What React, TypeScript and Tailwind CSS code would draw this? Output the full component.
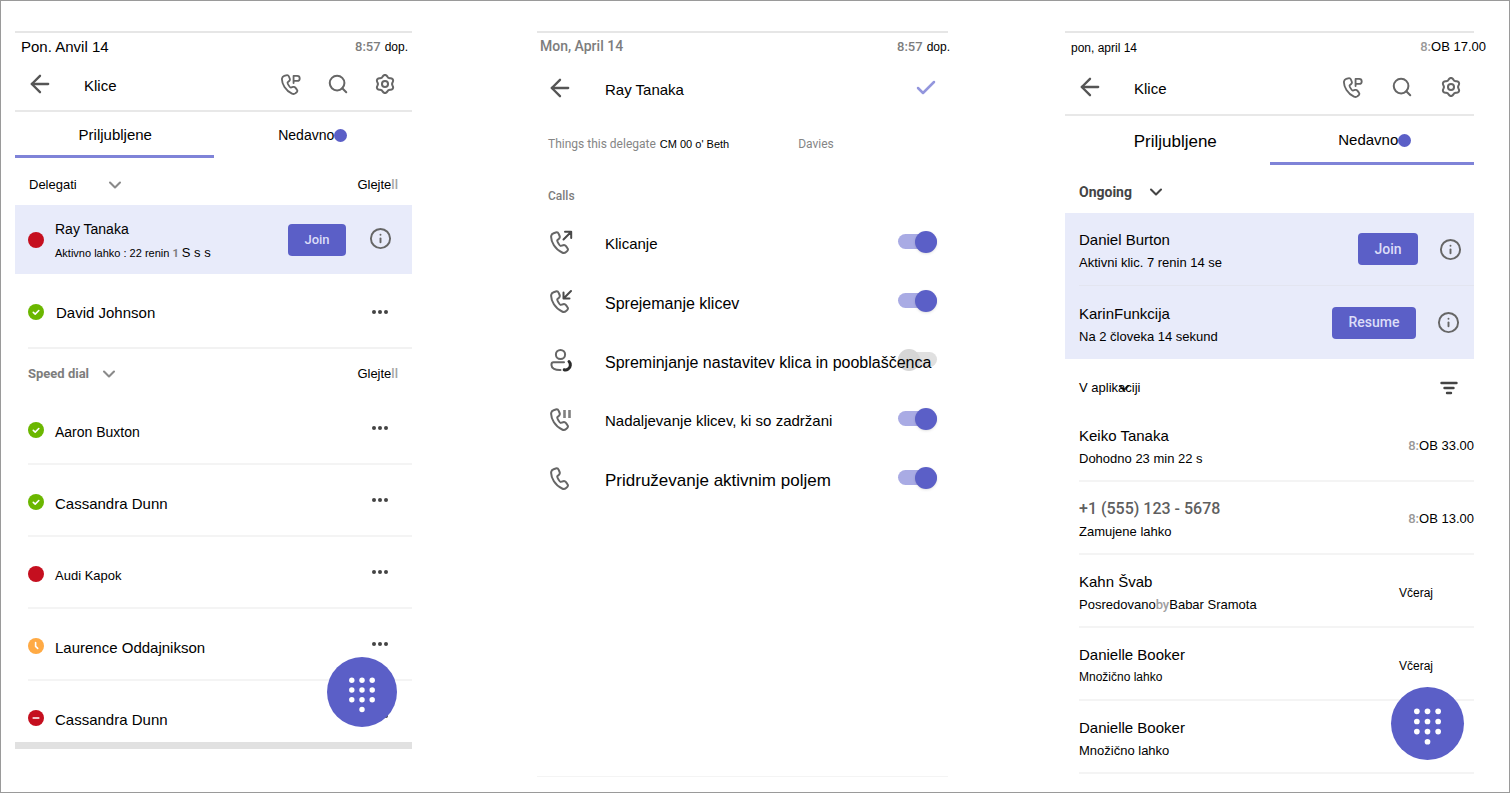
import type { ReactNode } from 'react';
import { ArrowLeft, Check, ChevronDown, Info, Search } from 'lucide-react';

const HANDSET =
  'M4.600 3.200 6.800 2.500C8 2.100 9.200 2.700 9.700 3.800L10.600 6C11 7 10.800 8 10 8.700L8.300 10.300C8.100 10.700 8.500 11.900 9.500 13.500 10.500 15.200 11.200 15.900 11.700 15.900L14.200 15.200C15.300 14.900 16.300 15.300 17 16.200L18.400 18.100C19.100 19 19 20.200 18.200 21L17.100 21.900C16 22.900 14.400 23.100 13.100 22.500 10.100 21.200 7.300 18.900 4.900 15.200 2.600 11.500 1.900 8.500 2.200 5.900 2.400 4.600 3.300 3.600 4.600 3.200Z';

const GEAR = Array.from({ length: 72 }, (_, i) => {
  const angle = (i * Math.PI) / 36;
  const radius = 8.8 - 1.1 * Math.cos(6 * angle);
  return `${(12 + radius * Math.cos(angle)).toFixed(2)},${(12 + radius * Math.sin(angle)).toFixed(2)}`;
}).join(' ');

type CallKind = 'park' | 'out' | 'in' | 'hold' | 'plain' | 'delegate';

function CallIcon({ kind, size = 'size-6' }: { kind: CallKind; size?: string }) {
  return (
    <svg
      viewBox="0 0 24 24"
      className={`shrink-0 ${size}`}
      fill="none"
      stroke="#666"
      strokeWidth="2"
      strokeLinecap="round"
      strokeLinejoin="round"
      aria-hidden="true"
    >
      {kind !== 'delegate' && <path d={HANDSET} />}
      {kind === 'park' && <path d="M14.800 11V3.200h4a2.700 2.700 0 0 1 0 5.400h-4" />}
      {kind === 'out' && <path d="M14.500 9.500 22 2M16 1.800h6.200V8" stroke="#4a4a4a" />}
      {kind === 'in' && <path d="M22 2 14.800 9.200M14.500 3.500v6h6" stroke="#4a4a4a" />}
      {kind === 'hold' && <path d="M15.500 3v8M20.500 3v8" strokeLinecap="butt" strokeWidth="2.600" stroke="#808080" />}
      {kind === 'delegate' && (
        <>
          <circle cx="11.500" cy="6.500" r="4.600" />
          <path d="M15 14.200H4.500a2 2 0 0 0-2 2v1c0 3.100 3.600 5 9 4.800" />
          <path d="M20 13.500c2 2 1.800 5.600-.8 7.400-1.300.9-2.700 1.200-4 .800" stroke="#2b2b2b" strokeWidth="3" />
        </>
      )}
    </svg>
  );
}

function GearIcon() {
  return (
    <svg viewBox="0 0 24 24" className="size-[22px]" fill="none" stroke="#666" strokeWidth="2.200" strokeLinejoin="round" aria-hidden="true">
      <polygon points={GEAR} />
      <circle cx="12" cy="12" r="3.300" />
    </svg>
  );
}

type SoftProps = { children: ReactNode; weight?: string; color?: string; className?: string };

function Soft({ children, weight = 'font-medium', color = 'text-[#7d7d7d]', className = '' }: SoftProps) {
  return <span className={`font-[Roboto,sans-serif] ${weight} ${color} ${className}`}>{children}</span>;
}

type Presence = 'busy' | 'available' | 'away' | 'dnd';

function PresenceDot({ presence }: { presence: Presence }) {
  const fill = presence === 'available' ? '#6bb700' : presence === 'away' ? '#ffaa44' : '#c50f1f';
  return (
    <svg viewBox="0 0 16 16" className="size-4 shrink-0" role="img" aria-label={presence}>
      <circle cx="8" cy="8" r="8" fill={fill} />
      <g fill="none" stroke="#fff" strokeWidth="1.6" strokeLinecap="round" strokeLinejoin="round">
        {presence === 'available' && <path d="m5.300 8.300 1.900 1.800 3.600-3.600" />}
        {presence === 'away' && <path d="M7.600 4.500v3.900l2.100 2" />}
        {presence === 'dnd' && <path d="M5.200 8h5.600" />}
      </g>
    </svg>
  );
}

function MoreButton() {
  return (
    <button type="button" aria-label="Več možnosti" className="flex h-4 w-4 items-center justify-between">
      <span className="size-1 rounded-full bg-[#444]" />
      <span className="size-1 rounded-full bg-[#444]" />
      <span className="size-1 rounded-full bg-[#444]" />
    </button>
  );
}

function InfoButton() {
  return (
    <button type="button" aria-label="Informacije" className="flex size-6 items-center justify-center">
      <Info className="size-[23px] text-[#666]" strokeWidth={2} />
    </button>
  );
}

function DialpadButton({ className }: { className: string }) {
  return (
    <button type="button" aria-label="Številčnica" className={`absolute rounded-full bg-[#5b5fc7] ${className}`}>
      <svg viewBox="0 0 72 72" className="size-full" fill="#fff" aria-hidden="true">
        {[24, 34, 44].map((cy) => [25.5, 36, 46.5].map((cx) => <circle key={`${cx}-${cy}`} cx={cx} cy={cy} r="2.800" />))}
        <circle cx="36" cy="54" r="2.800" />
      </svg>
    </button>
  );
}

function CallsHeader({ className, gap }: { className: string; gap: string }) {
  return (
    <div className={`flex items-center border-b-2 border-[#e8e8e8] pl-[11px] ${className}`}>
      <button type="button" aria-label="Nazaj">
        <ArrowLeft className="size-7 text-[#555]" strokeWidth={2} />
      </button>
      <h1 className="flex-1 pt-1 pl-[30px] text-[15px]">Klice</h1>
      <div className={`flex items-center ${gap}`}>
        <button type="button" aria-label="Parkirani klici"><CallIcon kind="park" size="size-[22px]" /></button>
        <button type="button" aria-label="Iskanje"><Search className="size-[22px] text-[#666]" strokeWidth={2.200} /></button>
        <button type="button" aria-label="Nastavitve"><GearIcon /></button>
      </div>
    </div>
  );
}

function Tab({ active, className, children }: { active: boolean; className: string; children: ReactNode }) {
  return (
    <button
      type="button"
      role="tab"
      aria-selected={active}
      className={`flex items-center justify-center border-b-3 ${active ? 'border-[#7f83d8]' : 'border-transparent'} ${className}`}
    >
      {children}
    </button>
  );
}

function Badge() {
  return <span className="size-[13px] rounded-full bg-[#5b5fc7]" />;
}

function SeeAll() {
  return (
    <a href="#vse" className="flex pr-3.5 text-[13px]">
      Glejte
      <Soft color="text-[#a5a5a5]">ll</Soft>
    </a>
  );
}

const contacts: { name: string; presence: Presence; size: string; row: string }[] = [
  { name: 'Aaron Buxton', presence: 'available', size: 'text-[14px]', row: 'h-[72px] border-b-2' },
  { name: 'Cassandra Dunn', presence: 'available', size: 'text-[15px]', row: 'h-[72px] border-b-2' },
  { name: 'Audi Kapok', presence: 'busy', size: 'text-[13px]', row: 'h-[72px] border-b-2' },
  { name: 'Laurence Oddajnikson', presence: 'away', size: 'text-[15px]', row: 'h-[72px] border-b-2' },
  { name: 'Cassandra Dunn', presence: 'dnd', size: 'text-[15px]', row: 'h-[61px]' },
];

function FavoritesScreen() {
  return (
    <section className="relative min-w-0 flex-[397_1_0%] self-start border-t-2 border-[#e6e6e6]">
      <div className="flex h-[27px] items-center justify-between pr-1 pl-1.5">
        <span className="pt-0.5 text-[15px]">Pon. Anvil 14</span>
        <span className="flex items-center gap-1 text-[12px]"><Soft className="text-[13px]">8:57</Soft>dop.</span>
      </div>
      <CallsHeader className="h-[52px] pr-4 pb-0.5" gap="gap-[25px]" />
      <div role="tablist" className="grid h-[46px] grid-cols-2">
        <Tab active className="pt-1 pl-0.5 text-[15px]">Priljubljene</Tab>
        <Tab active={false} className="pt-1 text-[14px]">Nedavno<Badge /></Tab>
      </div>
      <div className="flex h-[47px] items-center justify-between pt-1.5 pl-3.5">
        <button type="button" className="flex items-center text-[13px]">
          Delegati
          <ChevronDown className="ml-7 size-5 text-[#8a8a8a]" strokeWidth={2.500} />
        </button>
        <SeeAll />
      </div>
      <div className="flex h-[69px] items-center bg-[#e8ebfa] pl-[13px]">
        <PresenceDot presence="busy" />
        <div className="min-w-0 flex-1 pt-1 pl-[11px] whitespace-nowrap">
          <p className="text-[14px] leading-6">Ray Tanaka</p>
          <p className="text-[11px] leading-6">
            Aktivno lahko : 22 renin <Soft weight="font-bold">1</Soft> <span className="text-[13px]">S s s</span>
          </p>
        </div>
        <button type="button" className="h-8 w-[58px] rounded-sm bg-[#5b5fc7] font-[Roboto,sans-serif] text-[13px] font-medium text-[#dcddf8]">
          Join
        </button>
        <div className="pr-5 pb-0.5 pl-[22px]"><InfoButton /></div>
      </div>
      <div className="ml-[13px] flex h-[75px] items-center border-b-2 border-[#f2f2f2] pt-0.5 pr-6">
        <PresenceDot presence="available" />
        <span className="flex-1 pt-1 pl-3 text-[15px]">David Johnson</span>
        <MoreButton />
      </div>
      <div className="flex h-11 items-center justify-between pt-1.5 pl-[13px]">
        <button type="button" className="flex items-center text-[13px]">
          <Soft weight="font-bold">Speed dial</Soft>
          <ChevronDown className="ml-2.5 size-5 text-[#8a8a8a]" strokeWidth={2.500} />
        </button>
        <SeeAll />
      </div>
      <ul className="pl-[13px]">
        {contacts.map((c, i) => (
          <li key={i} className={`flex items-start border-[#f4f4f4] pt-[27px] pr-6 ${c.row}`}>
            <div className="flex h-5 flex-1 items-center">
              <PresenceDot presence={c.presence} />
              <span className={`pt-1 pl-[11px] ${c.size}`}>{c.name}</span>
            </div>
            <MoreButton />
          </li>
        ))}
      </ul>
      <div className="h-[7px] bg-[#e1e1e1]" />
      <DialpadButton className="right-[15px] bottom-[22px] size-[70px]" />
    </section>
  );
}

const permissions: { id: string; label: string; kind: CallKind; on: boolean; size: string }[] = [
  { id: 'make', label: 'Klicanje', kind: 'out', on: true, size: 'text-[15px]' },
  { id: 'receive', label: 'Sprejemanje klicev', kind: 'in', on: true, size: 'text-[16px]' },
  { id: 'change', label: 'Spreminjanje nastavitev klica in pooblaščenca', kind: 'delegate', on: false, size: 'text-[16px]' },
  { id: 'resume', label: 'Nadaljevanje klicev, ki so zadržani', kind: 'hold', on: true, size: 'text-[15px]' },
  { id: 'join', label: 'Pridruževanje aktivnim poljem', kind: 'plain', on: true, size: 'text-[17px]' },
];

function DelegateScreen() {
  return (
    <section className="flex min-w-0 flex-[411_1_0%] flex-col border-t-2 border-b border-t-[#e6e6e6] border-b-[#f4f4f4]">
      <div className="-mr-0.5 flex h-[27px] items-center justify-between pl-[3px]">
        <Soft className="text-[14px]">Mon, April 14</Soft>
        <span className="flex items-center gap-1 text-[12px]"><Soft className="text-[13px]">8:57</Soft>dop.</span>
      </div>
      <div className="flex h-14 items-center pr-2.5 pl-[9px]">
        <button type="button" aria-label="Nazaj">
          <ArrowLeft className="size-7 text-[#555]" strokeWidth={2} />
        </button>
        <h1 className="flex-1 pt-1 pl-[31px] text-[15px]">Ray Tanaka</h1>
        <button type="button" aria-label="Shrani"><Check className="size-6 text-[#9396dd]" strokeWidth={2.500} /></button>
      </div>
      <p className="flex items-center pt-[18px] pl-[11px] text-[11px] leading-5 whitespace-nowrap">
        <Soft weight="font-normal" color="text-[#858585]" className="text-[12px]">Things this delegate</Soft>
        <span className="pr-[69px] pl-1">CM 00 o' Beth</span>
        <Soft weight="font-normal" color="text-[#858585]" className="text-[12px]">Davies</Soft>
      </p>
      <h2 className="pt-8 pl-[11px] text-[12px] leading-5"><Soft>Calls</Soft></h2>
      <ul className="pt-1.5">
        {permissions.map((p) => (
          <li key={p.id} className="flex h-[59px] items-center pr-[11px] pl-3">
            <CallIcon kind={p.kind} />
            <label htmlFor={p.id} className={`relative z-10 min-w-0 flex-1 pt-1.5 pl-8 whitespace-nowrap ${p.size}`}>
              {p.label}
            </label>
            <input
              id={p.id}
              type="checkbox"
              role="switch"
              defaultChecked={p.on}
              className="flex h-[15px] w-[39px] shrink-0 appearance-none items-center rounded-full bg-[#e0e0e0] before:block before:size-[22px] before:shrink-0 before:rounded-full before:bg-[#d6d6d6] checked:justify-end checked:bg-[#a9abe4] checked:before:bg-[#5b5fc7] checked:before:shadow-sm"
            />
          </li>
        ))}
      </ul>
    </section>
  );
}

function SoftTime({ children }: { children: ReactNode }) {
  return <span className="flex text-[13px]"><Soft color="text-[#999]">8:</Soft>{children}</span>;
}

const recents: { name: ReactNode; detail: ReactNode; detailSize: string; time: ReactNode }[] = [
  { name: 'Keiko Tanaka', detail: 'Dohodno 23 min 22 s', detailSize: 'text-[13px]', time: <SoftTime>OB 33.00</SoftTime> },
  { name: <Soft color="text-[#5f5f5f]" className="text-[16px]">+1 (555) 123 - 5678</Soft>, detail: 'Zamujene lahko', detailSize: 'text-[13px]', time: <SoftTime>OB 13.00</SoftTime> },
  {
    name: 'Kahn Švab',
    detail: <>Posredovano<Soft color="text-[#a0a0a0]">by</Soft>Babar Sramota</>,
    detailSize: 'text-[13px]',
    time: <span className="pr-[41px] text-[12px]">Včeraj</span>,
  },
  { name: 'Danielle Booker', detail: 'Množično lahko', detailSize: 'text-[12px]', time: <span className="pr-[41px] text-[12px]">Včeraj</span> },
  { name: 'Danielle Booker', detail: 'Množično lahko', detailSize: 'text-[13px]', time: null },
];

const ongoing = [
  { name: 'Daniel Burton', detail: 'Aktivni klic. 7 renin 14 se', action: 'Join', button: 'w-[60px]', row: 'border-b border-[#e3e5f0]', info: 'pl-5 pr-3' },
  { name: 'KarinFunkcija', detail: 'Na 2 človeka 14 sekund', action: 'Resume', button: 'w-[84px]', row: '', info: 'pl-5 pr-3.5' },
];

function RecentScreen() {
  return (
    <section className="relative min-w-0 flex-[409_1_0%] self-start border-t-2 border-[#e6e6e6]">
      <div className="-mr-3 flex h-[27px] items-center justify-between pl-1.5">
        <span className="pt-0.5 text-[12px]">pon, april 14</span>
        <SoftTime>OB 17.00</SoftTime>
      </div>
      <CallsHeader className="h-[56px] pr-3" gap="gap-[27px]" />
      <div role="tablist" className="grid h-[49px] grid-cols-2">
        <Tab active={false} className="pt-1.5 pl-4 text-[17px]">Priljubljene</Tab>
        <Tab active className="pt-0.5 pl-1.5 text-[15px]">Nedavno<Badge /></Tab>
      </div>
      <div className="flex h-12 items-center pt-1.5 pl-3.5">
        <button type="button" className="flex items-center text-[14px]">
          <Soft weight="font-bold" color="text-[#444]">Ongoing</Soft>
          <ChevronDown className="ml-3.5 size-5 text-[#444]" strokeWidth={2.500} />
        </button>
      </div>
      <ul className="bg-[#e8ebfa] pl-3.5">
        {ongoing.map((o) => (
          <li key={o.name} className={`flex h-[73px] items-center ${o.row}`}>
            <div className="min-w-0 flex-1 pt-1 whitespace-nowrap">
              <p className="text-[15px] leading-[23px]">{o.name}</p>
              <p className="text-[13px] leading-[23px]">{o.detail}</p>
            </div>
            <button type="button" className={`h-8 rounded-sm bg-[#5b5fc7] font-[Roboto,sans-serif] text-[14px] font-medium text-[#dcddf8] ${o.button}`}>
              {o.action}
            </button>
            <div className={o.info}><InfoButton /></div>
          </li>
        ))}
      </ul>
      <div className="flex h-[50px] items-center justify-between pt-2 pr-4 pl-3.5">
        <button type="button" className="flex items-center text-[13px]">
          <span className="relative">V aplikaciji</span>
          <ChevronDown className="-ml-6 size-4 text-[#333]" strokeWidth={3} />
        </button>
        <button type="button" aria-label="Filter">
          <svg viewBox="0 0 18 16" className="h-4 w-[18px]" fill="none" stroke="#444" strokeWidth="2.400" strokeLinecap="round" aria-hidden="true">
            <path d="M1.500 3h15M4.500 8h9M7 13h4" />
          </svg>
        </button>
      </div>
      <ul className="pl-3.5">
        {recents.map((r, i) => (
          <li key={i} className="flex h-[73px] items-center justify-between border-b-2 border-[#f4f4f4]">
            <div className="min-w-0 pt-1 whitespace-nowrap">
              <p className="text-[15px] leading-[23px]">{r.name}</p>
              <p className={`leading-[23px] ${r.detailSize}`}>{r.detail}</p>
            </div>
            <div className="pt-0.5">{r.time}</div>
          </li>
        ))}
      </ul>
      <DialpadButton className="right-2.5 bottom-[14px] size-[73px]" />
    </section>
  );
}

export default function App() {
  return (
    <main className="flex min-h-screen border border-[#9a9a9a] bg-white pt-[30px] pr-[35px] pb-[15px] pl-[14px] font-['Liberation_Sans',Arial,sans-serif] text-black">
      <FavoritesScreen />
      <div className="w-[125px] shrink-0" />
      <DelegateScreen />
      <div className="w-[117px] shrink-0" />
      <RecentScreen />
    </main>
  );
}
